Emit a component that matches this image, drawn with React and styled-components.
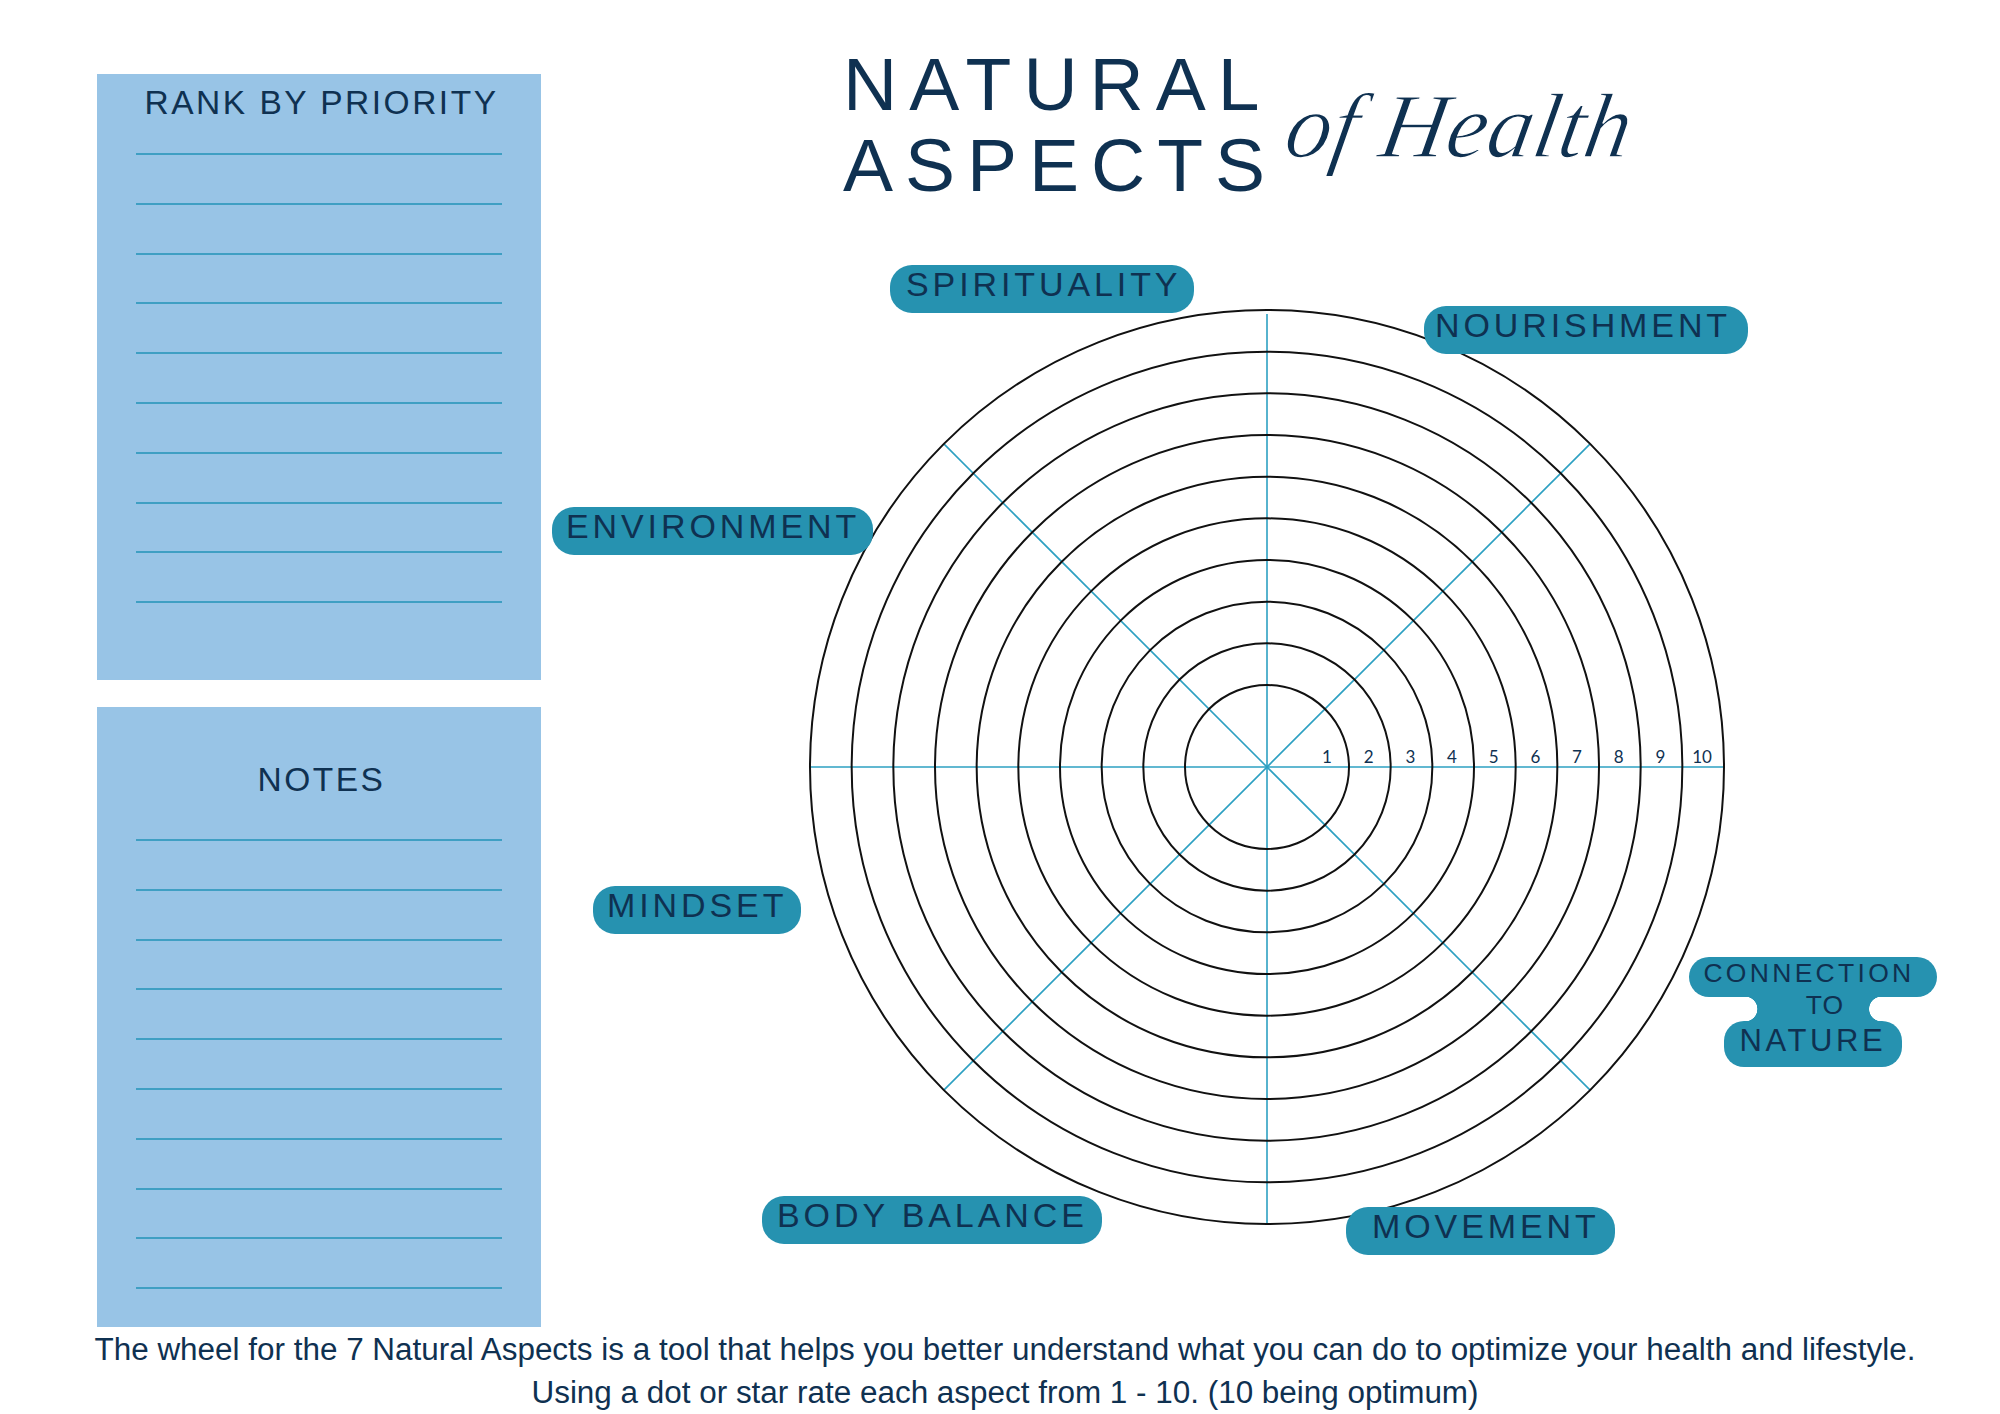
import React from 'react';
import styled, { createGlobalStyle } from 'styled-components';

const NAVY = '#0f3151';
const TEAL = '#2692b0';
const SKY = '#98c4e6';
const RULE = '#3f9fc3';
const SPOKE = '#2da0c2';

const GlobalStyle = createGlobalStyle`
  html, body { margin: 0; padding: 0; background: #ffffff; }
  body { font-family: "Liberation Sans", Arial, sans-serif; }
`;

const Page = styled.div`
  width: 2000px;
  height: 1414px;
  overflow: hidden;
  display: flex;
  flex-direction: column;
  background: #ffffff;
  color: ${NAVY};
`;

const Main = styled.div`
  display: flex;
  height: 1327px;
`;

const Sidebar = styled.aside`
  width: 444px;
  margin-left: 97px;
  padding-top: 74px;
  box-sizing: border-box;
  display: flex;
  flex-direction: column;
  gap: 27px;
`;

const Panel = styled.section`
  height: ${(p) => p.$h}px;
  padding-top: ${(p) => p.$pt}px;
  box-sizing: border-box;
  background: ${SKY};
  display: flex;
  flex-direction: column;
  align-items: center;
`;

const PanelTitle = styled.h2`
  margin: 0;
  padding-left: 5px;
  font: 400 33.5px/40px "Liberation Sans", Arial, sans-serif;
  letter-spacing: 2.5px;
  color: ${NAVY};
  white-space: nowrap;
`;

const Rules = styled.div`
  width: 366px;
  margin-top: ${(p) => p.$mt}px;
  display: flex;
  flex-direction: column;
  gap: 47.8px;
`;

const Rule = styled.div`
  height: 2px;
  background: ${RULE};
`;

const Stage = styled.div`
  flex: 1;
  display: flex;
  flex-direction: column;
`;

const Header = styled.header`
  height: 162px;
  margin-top: 44px;
  margin-left: 302px;
  display: flex;
  align-items: flex-start;
`;

const TitleBlock = styled.h1`
  margin: 0;
  font: 400 75px/81px "Liberation Sans", Arial, sans-serif;
  letter-spacing: 12px;
  color: ${NAVY};
`;

const TitleLine = styled.span`
  display: block;
  white-space: nowrap;
`;

const Script = styled.span`
  display: inline-block;
  margin-top: 36px;
  margin-left: 2px;
  font: italic 400 92px/92px "Liberation Serif", "Times New Roman", serif;
  color: ${NAVY};
  -webkit-text-stroke: 1.4px #ffffff;
  transform: skewX(-10deg);
  transform-origin: left bottom;
  white-space: nowrap;
`;

const Diagram = styled.div`
  position: relative;
  flex: 1;
  padding-left: 265.5px;
  padding-top: 101px;
  box-sizing: border-box;
`;

const Wheel = styled.svg`
  display: block;
`;

const Pill = styled.div`
  position: absolute;
  left: ${(p) => p.$x}px;
  top: ${(p) => p.$y}px;
  width: ${(p) => p.$w}px;
  height: 48px;
  box-sizing: border-box;
  padding-top: 1px;
  padding-left: ${(p) => p.$pl}px;
  border-radius: 22px;
  background: ${TEAL};
  color: ${NAVY};
  font: 400 34px/36px "Liberation Sans", Arial, sans-serif;
  letter-spacing: 3.9px;
  white-space: nowrap;
`;

const Compound = styled.div`
  position: absolute;
  left: ${(p) => p.$x}px;
  top: ${(p) => p.$y}px;
  width: 248px;
  display: flex;
  flex-direction: column;
  align-items: center;
  color: ${NAVY};
  font-family: "Liberation Sans", Arial, sans-serif;
  white-space: nowrap;
`;

const CompoundTop = styled.div`
  width: 248px;
  height: 40px;
  box-sizing: border-box;
  padding-right: 8px;
  border-radius: 20px;
  background: ${TEAL};
  text-align: center;
  font-size: 26.5px;
  line-height: 32px;
  letter-spacing: 3.3px;
`;

const Neck = styled.div`
  width: 137px;
  height: 24px;
  box-sizing: border-box;
  padding-left: 24px;
  text-align: center;
  font-size: 26.5px;
  line-height: 16px;
  letter-spacing: 1px;
  background:
    radial-gradient(circle at 0 50%, transparent 12px, ${TEAL} 12.6px) left / calc(50% + 1px) 100% no-repeat,
    radial-gradient(circle at 100% 50%, transparent 12px, ${TEAL} 12.6px) right / calc(50% + 1px) 100% no-repeat;
`;

const CompoundBottom = styled.div`
  width: 178px;
  height: 46px;
  border-radius: 20px;
  background: ${TEAL};
  text-align: center;
  font-size: 31px;
  line-height: 39px;
  letter-spacing: 3.6px;
`;

const Footer = styled.footer`
  margin-top: 1px;
  padding-left: 10px;
  text-align: center;
  color: ${NAVY};
  font: 400 31.45px/43px "Liberation Sans", Arial, sans-serif;
`;

const FooterLine = styled.p`
  margin: 0;
  white-space: nowrap;
`;

const labels = [
  { text: 'SPIRITUALITY', x: 349, y: 59, w: 304, pl: 16 },
  { text: 'NOURISHMENT', x: 883, y: 100, w: 324, pl: 11 },
  { text: 'ENVIRONMENT', x: 11, y: 301, w: 321, pl: 14 },
  { text: 'MINDSET', x: 52, y: 680, w: 208, pl: 14 },
  { text: 'BODY BALANCE', x: 221, y: 990, w: 340, pl: 15 },
  { text: 'MOVEMENT', x: 805, y: 1001, w: 269, pl: 26 },
];

const C = 460;
const R = 457;
const radii = Array.from({ length: 10 }, (_, i) => 82 + (i * 375) / 9);
const D = R / Math.SQRT2;

function WheelChart() {
  return (
    <Wheel width="920" height="920" viewBox="0 0 920 920">
      <g stroke={SPOKE} strokeWidth="1.6">
        <line x1={C - R} y1={C} x2={C + R} y2={C} />
        <line x1={C} y1={C - R + 4} x2={C} y2={C + R} />
        <line x1={C - D} y1={C - D} x2={C + D} y2={C + D} />
        <line x1={C + D} y1={C - D} x2={C - D} y2={C + D} />
      </g>
      <g fill="none" stroke="#111111" strokeWidth="2">
        {radii.map((r) => (
          <circle key={r} cx={C} cy={C} r={r} />
        ))}
      </g>
      <g fill={NAVY} fontFamily="Lato, 'Noto Sans', sans-serif" fontSize="17" textAnchor="middle">
        {radii.map((r, i) => (
          <text key={i} x={C + r - 22} y={C - 4}>
            {i + 1}
          </text>
        ))}
      </g>
    </Wheel>
  );
}

export default function App() {
  return (
    <>
      <GlobalStyle />
      <Page>
        <Main>
          <Sidebar>
            <Panel $h={606} $pt={9.4}>
              <PanelTitle>RANK BY PRIORITY</PanelTitle>
              <Rules $mt={29.6}>
                {Array.from({ length: 10 }, (_, i) => (
                  <Rule key={i} />
                ))}
              </Rules>
            </Panel>
            <Panel $h={620} $pt={53.4}>
              <PanelTitle>NOTES</PanelTitle>
              <Rules $mt={38.6}>
                {Array.from({ length: 10 }, (_, i) => (
                  <Rule key={i} />
                ))}
              </Rules>
            </Panel>
          </Sidebar>
          <Stage>
            <Header>
              <TitleBlock>
                <TitleLine>NATURAL</TitleLine>
                <TitleLine>ASPECTS</TitleLine>
              </TitleBlock>
              <Script>of Health</Script>
            </Header>
            <Diagram>
              <WheelChart />
              {labels.map((l) => (
                <Pill key={l.text} $x={l.x} $y={l.y} $w={l.w} $pl={l.pl}>
                  {l.text}
                </Pill>
              ))}
              <Compound $x={1148} $y={751}>
                <CompoundTop>CONNECTION</CompoundTop>
                <Neck>TO</Neck>
                <CompoundBottom>NATURE</CompoundBottom>
              </Compound>
            </Diagram>
          </Stage>
        </Main>
        <Footer>
          <FooterLine>
            The wheel for the 7 Natural Aspects is a tool that helps you better understand what you can do to optimize your health and lifestyle.
          </FooterLine>
          <FooterLine>Using a dot or star rate each aspect from 1 - 10. (10 being optimum)</FooterLine>
        </Footer>
      </Page>
    </>
  );
}
